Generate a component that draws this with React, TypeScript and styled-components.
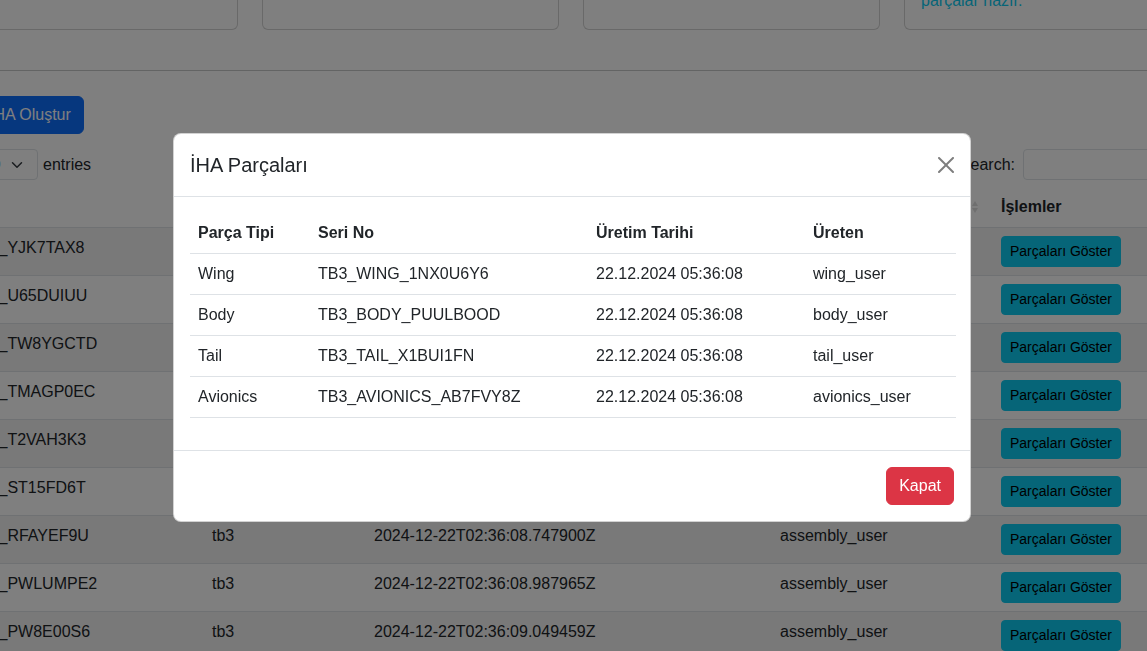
import React from "react";
import styled, { createGlobalStyle } from "styled-components";

const GlobalStyle = createGlobalStyle`
  html, body {
    margin: 0;
    padding: 0;
    overflow: hidden;
    background: #ffffff;
  }
  body {
    font-family: "Liberation Sans", Arial, sans-serif;
    font-size: 16px;
    line-height: 1.5;
    color: #212529;
  }
  *, *::before, *::after { box-sizing: border-box; }
`;

/* ---------- background page ---------- */

const Page = styled.div`
  width: 1260px;
  margin: -84px 0 0 -59px;
`;

const StatGrid = styled.div`
  display: grid;
  grid-template-columns: repeat(4, 1fr);
  gap: 24px;
`;

const StatCard = styled.div`
  border: 1px solid rgba(0, 0, 0, 0.175);
  border-radius: 6px;
  padding: 16px;
  background: #fff;
`;

const StatTitle = styled.h5`
  margin: 0 0 8px;
  font-size: 20px;
  font-weight: 500;
  line-height: 1.2;
`;

const StatText = styled.p<{ $tone?: "info" }>`
  margin: 0;
  color: ${(p) => (p.$tone === "info" ? "#0dcaf0" : "#212529")};
`;

const Divider = styled.hr`
  margin: 40px 0 25px;
  border: 0;
  border-top: 1px solid rgba(33, 37, 41, 0.25);
`;

const Toolbar = styled.div`
  margin-bottom: 15px;
`;

const PrimaryButton = styled.button`
  font-family: inherit;
  font-size: 16px;
  line-height: 1.5;
  padding: 6px 12px;
  border: 1px solid #0d6efd;
  background: #0d6efd;
  color: #fff;
  border-radius: 6px;
`;

const Controls = styled.div`
  display: flex;
  justify-content: space-between;
  align-items: center;
  height: 31px;
`;

const ControlLabel = styled.label<{ $gap: number }>`
  display: flex;
  align-items: center;
  gap: ${(p) => p.$gap}px;
  white-space: nowrap;
`;

const SelectBox = styled.div`
  display: inline-flex;
  align-items: center;
  height: 31px;
  padding-left: 2px;
  font-size: 14px;
  border: 1px solid #dee2e6;
  border-radius: 4px;
  background: #fff;
`;

const ChevronSlot = styled.span`
  display: flex;
  justify-content: flex-end;
  width: 36px;
  padding-right: 12px;
`;

const SearchInput = styled.input`
  width: 178px;
  height: 31px;
  margin-left: 4px;
  padding: 4px 8px;
  font-family: inherit;
  font-size: 14px;
  border: 1px solid #dee2e6;
  border-radius: 4px;
  background: #fff;
`;

const DataTable = styled.table`
  width: 100%;
  table-layout: fixed;
  border-collapse: collapse;
  margin-top: 6px;
`;

const Col = styled.col<{ $w: number }>`
  width: ${(p) => p.$w}px;
`;

const HeadCell = styled.th<{ $sortable?: boolean }>`
  padding: 9px ${(p) => (p.$sortable ? "14px" : "8px")} 8px 8px;
  text-align: left;
  font-weight: 700;
  vertical-align: top;
  border-bottom: 1px solid #dee2e6;
  white-space: nowrap;
`;

const HeadInner = styled.div`
  display: flex;
  align-items: center;
  justify-content: space-between;
`;

const BodyRow = styled.tr<{ $striped?: boolean }>`
  background: ${(p) => (p.$striped ? "rgba(0, 0, 0, 0.05)" : "transparent")};
`;

const Cell = styled.td`
  padding: 8px;
  vertical-align: top;
  border-bottom: 1px solid #dee2e6;
  white-space: nowrap;
  overflow: hidden;
`;

const InfoButton = styled.button`
  font-family: inherit;
  font-size: 14px;
  line-height: 1.5;
  padding: 4px 8px;
  border: 1px solid #0dcaf0;
  background: #0dcaf0;
  color: #000;
  border-radius: 4px;
  white-space: nowrap;
`;

/* ---------- modal ---------- */

const Backdrop = styled.div`
  position: fixed;
  inset: 0;
  padding: 4px 3px 0 0;
  background: rgba(0, 0, 0, 0.5);
  display: flex;
  align-items: center;
  justify-content: center;
`;

const Dialog = styled.div`
  width: 798px;
  background: #fff;
  border: 1px solid rgba(0, 0, 0, 0.175);
  border-radius: 8px;
  display: flex;
  flex-direction: column;
`;

const DialogHeader = styled.div`
  display: flex;
  align-items: center;
  justify-content: space-between;
  padding: 16px;
  border-bottom: 1px solid #dee2e6;
`;

const DialogTitle = styled.h5`
  margin: 0;
  font-size: 20px;
  font-weight: 400;
  line-height: 1.5;
`;

const CloseButton = styled.button`
  display: flex;
  align-items: center;
  justify-content: center;
  width: 32px;
  height: 32px;
  margin: -8px -8px -8px auto;
  padding: 8px;
  border: 0;
  background: transparent;
  opacity: 0.5;
`;

const DialogBody = styled.div`
  padding: 16px;
`;

const PartsTable = styled.table`
  width: 100%;
  table-layout: fixed;
  border-collapse: collapse;
  margin-bottom: 16px;
`;

const PartsHead = styled.th`
  padding: 8px;
  text-align: left;
  font-weight: 700;
  border-bottom: 1px solid #dee2e6;
`;

const PartsCell = styled.td`
  padding: 8px;
  border-bottom: 1px solid #dee2e6;
  white-space: nowrap;
`;

const DialogFooter = styled.div`
  display: flex;
  justify-content: flex-end;
  padding: 12px;
  border-top: 1px solid #dee2e6;
`;

const DangerButton = styled.button`
  margin: 4px;
  font-family: inherit;
  font-size: 16px;
  line-height: 1.5;
  padding: 6px 12px;
  border: 1px solid #dc3545;
  background: #dc3545;
  color: #fff;
  border-radius: 6px;
`;

/* ---------- icons ---------- */

const Chevron = () => (
  <svg width="16" height="12" viewBox="0 0 16 16" fill="none">
    <path d="m2 5 6 6 6-6" stroke="#343a40" strokeWidth="2" strokeLinecap="round" strokeLinejoin="round" />
  </svg>
);

const SortIcon = () => (
  <svg width="8" height="16" viewBox="0 0 8 16">
    <path d="M1 7 4 2 7 7Z" fill="#212529" fillOpacity="0.15" />
    <path d="M1 9 4 14 7 9Z" fill="#212529" fillOpacity="0.15" />
  </svg>
);

const CloseIcon = () => (
  <svg width="16" height="16" viewBox="0 0 16 16">
    <path
      fill="#000"
      d="M.293.293a1 1 0 0 1 1.414 0L8 6.586 14.293.293a1 1 0 1 1 1.414 1.414L9.414 8l6.293 6.293a1 1 0 0 1-1.414 1.414L8 9.414l-6.293 6.293a1 1 0 0 1-1.414-1.414L6.586 8 .293 1.707a1 1 0 0 1 0-1.414z"
    />
  </svg>
);

/* ---------- data ---------- */

const stats = [
  { title: "Toplam İHA", lines: ["24 adet İHA üretildi."] },
  { title: "Bugün Üretilen", lines: ["10 adet İHA."] },
  { title: "Eksik Parça", lines: ["Eksik parça yok."] },
  { title: "Stok Durumu", lines: ["Montaj için gerekli tüm", "parçalar hazır."], info: true },
];

const uavs = [
  { id: "UAV24_YJK7TAX8", date: "2024-12-22T02:36:10.118204Z" },
  { id: "UAV24_U65DUIUU", date: "2024-12-22T02:36:09.904512Z" },
  { id: "UAV24_TW8YGCTD", date: "2024-12-22T02:36:09.611873Z" },
  { id: "UAV24_TMAGP0EC", date: "2024-12-22T02:36:09.402177Z" },
  { id: "UAV24_T2VAH3K3", date: "2024-12-22T02:36:09.215630Z" },
  { id: "UAV24_ST15FD6T", date: "2024-12-22T02:36:08.531946Z" },
  { id: "UAV24_RFAYEF9U", date: "2024-12-22T02:36:08.747900Z" },
  { id: "UAV24_PWLUMPE2", date: "2024-12-22T02:36:08.987965Z" },
  { id: "UAV24_PW8E00S6", date: "2024-12-22T02:36:09.049459Z" },
  { id: "UAV24_PD4KQ7NS", date: "2024-12-22T02:36:07.860321Z" },
];

const parts = [
  { type: "Wing", serial: "TB3_WING_1NX0U6Y6", user: "wing_user" },
  { type: "Body", serial: "TB3_BODY_PUULBOOD", user: "body_user" },
  { type: "Tail", serial: "TB3_TAIL_X1BUI1FN", user: "tail_user" },
  { type: "Avionics", serial: "TB3_AVIONICS_AB7FVY8Z", user: "avionics_user" },
];

const bgColumns = [
  { label: "Kod", w: 263, sortable: true },
  { label: "Model", w: 162, sortable: true },
  { label: "Üretim Tarihi", w: 406, sortable: true },
  { label: "Üreten", w: 221, sortable: true },
  { label: "İşlemler", w: 208, sortable: false },
];

const partColumns = [
  { label: "Parça Tipi", w: 120 },
  { label: "Seri No", w: 278 },
  { label: "Üretim Tarihi", w: 217 },
  { label: "Üreten", w: 151 },
];

export default function App() {
  return (
    <>
      <GlobalStyle />
      <Page>
        <StatGrid>
          {stats.map((s) => (
            <StatCard key={s.title}>
              <StatTitle>{s.title}</StatTitle>
              <StatText $tone={s.info ? "info" : undefined}>
                {s.lines.map((l, i) => (
                  <React.Fragment key={l}>
                    {i > 0 && <br />}
                    {l}
                  </React.Fragment>
                ))}
              </StatText>
            </StatCard>
          ))}
        </StatGrid>

        <Divider />

        <Toolbar>
          <PrimaryButton>Yeni İHA Oluştur</PrimaryButton>
        </Toolbar>

        <Controls>
          <ControlLabel $gap={1}>
            Show
            <SelectBox>
              10
              <ChevronSlot>
                <Chevron />
              </ChevronSlot>
            </SelectBox>
            <span>&nbsp;entries</span>
          </ControlLabel>
          <ControlLabel $gap={4}>
            Search:
            <SearchInput type="search" />
          </ControlLabel>
        </Controls>

        <DataTable>
          <colgroup>
            {bgColumns.map((c) => (
              <Col key={c.label} $w={c.w} />
            ))}
          </colgroup>
          <thead>
            <tr>
              {bgColumns.map((c) => (
                <HeadCell key={c.label} $sortable={c.sortable}>
                  <HeadInner>
                    <span>{c.label}</span>
                    {c.sortable && <SortIcon />}
                  </HeadInner>
                </HeadCell>
              ))}
            </tr>
          </thead>
          <tbody>
            {uavs.map((u, i) => (
              <BodyRow key={u.id} $striped={i % 2 === 0}>
                <Cell>{u.id}</Cell>
                <Cell>tb3</Cell>
                <Cell>{u.date}</Cell>
                <Cell>assembly_user</Cell>
                <Cell>
                  <InfoButton>Parçaları Göster</InfoButton>
                </Cell>
              </BodyRow>
            ))}
          </tbody>
        </DataTable>
      </Page>

      <Backdrop>
        <Dialog>
          <DialogHeader>
            <DialogTitle>İHA Parçaları</DialogTitle>
            <CloseButton aria-label="Kapat">
              <CloseIcon />
            </CloseButton>
          </DialogHeader>
          <DialogBody>
            <PartsTable>
              <colgroup>
                {partColumns.map((c) => (
                  <Col key={c.label} $w={c.w} />
                ))}
              </colgroup>
              <thead>
                <tr>
                  {partColumns.map((c) => (
                    <PartsHead key={c.label}>{c.label}</PartsHead>
                  ))}
                </tr>
              </thead>
              <tbody>
                {parts.map((p) => (
                  <tr key={p.serial}>
                    <PartsCell>{p.type}</PartsCell>
                    <PartsCell>{p.serial}</PartsCell>
                    <PartsCell>22.12.2024 05:36:08</PartsCell>
                    <PartsCell>{p.user}</PartsCell>
                  </tr>
                ))}
              </tbody>
            </PartsTable>
          </DialogBody>
          <DialogFooter>
            <DangerButton>Kapat</DangerButton>
          </DialogFooter>
        </Dialog>
      </Backdrop>
    </>
  );
}
